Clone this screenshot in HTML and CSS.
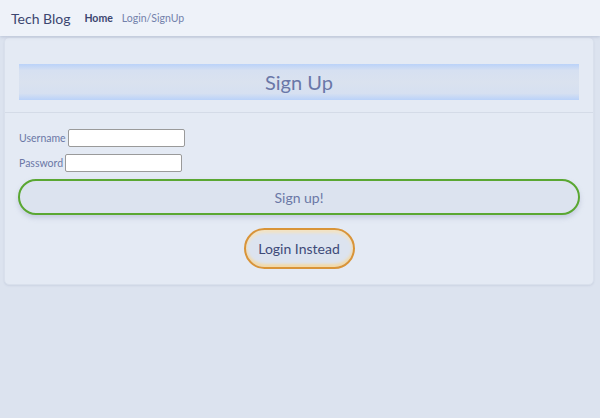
FILE: index.html
```html
<!DOCTYPE html>
<html lang="en">
<head>
<meta charset="utf-8">
<title>Tech Blog - Sign Up</title>
<link rel="stylesheet" href="styles.css">
</head>
<body>
<nav class="navbar">
  <span class="brand">Tech Blog</span>
  <a class="nav-link active" href="#">Home</a>
  <a class="nav-link" href="#">Login/SignUp</a>
</nav>
<main class="card">
  <header class="card-header">
    <h1 class="banner">Sign Up</h1>
  </header>
  <form class="card-body">
    <div class="field">
      <label class="label" for="u">Username</label>
      <input class="input" id="u" type="text">
    </div>
    <div class="field">
      <label class="label" for="p">Password</label>
      <input class="input" id="p" type="password">
    </div>
    <button class="btn-signup" type="button">Sign up!</button>
    <div class="alt">
      <button class="btn-login" type="button">Login Instead</button>
    </div>
  </form>
</main>
</body>
</html>
```
FILE: styles.css
```css
* { box-sizing: border-box; }
html, body { height: 100%; }
body {
  margin: 0;
  background: #dce3ef;
  font-family: "Lato", "Open Sans", sans-serif;
  color: #6b78a6;
}
.navbar {
  height: 36px;
  background: #eef2f9;
  display: flex;
  align-items: center;
  padding-left: 11px;
  box-shadow: 0 1px 3px rgba(120,135,170,0.35);
  position: relative;
  z-index: 1;
}
.brand {
  font-size: 14px;
  color: #3c4670;
  margin-right: 14px;
}
.nav-link {
  font-size: 10.5px;
  text-decoration: none;
  color: #7381ab;
  margin-right: 9px;
}
.nav-link.active { color: #3c4670; font-weight: 700; }
.card {
  margin: 1px 6px 0 4px;
  background: #e4eaf4;
  border: 1px solid #d9e0ec;
  border-radius: 5px;
  box-shadow: 0 1px 2px rgba(140,150,180,0.2);
}
.card-header {
  padding: 26px 14px 12px;
  border-bottom: 1px solid #d4dbe7;
}
.banner {
  margin: 0;
  height: 36px;
  line-height: 36px;
  text-align: center;
  font-weight: 400;
  font-size: 20px;
  color: #6a77a8;
  background: linear-gradient(to bottom, #bad2f9 0%, #d6e0f1 18%, #dae2ef 50%, #d6e0f1 82%, #bad2f9 100%);
}
.card-body {
  padding: 16px 13px 15px 13px;
  display: flex;
  flex-direction: column;
}
.field {
  display: flex;
  align-items: center;
  gap: 2px;
  margin-bottom: 7px;
  padding-left: 1px;
}
.label { font-size: 10.5px; color: #6b78a6; }
.input {
  width: 117px;
  height: 18px;
  border: 1px solid #9a9a9a;
  border-radius: 2px;
  background: #fff;
}
.btn-signup {
  height: 36px;
  width: 100%;
  border: 2px solid #5aa732;
  border-radius: 18px;
  background: #dce3ef;
  color: #6b78a6;
  font-family: inherit;
  font-size: 14px;
  box-shadow: 0 3px 5px rgba(140,150,185,0.35);
}
.alt {
  display: flex;
  justify-content: center;
  margin-top: 13px;
}
.btn-login {
  width: 111px;
  height: 41px;
  border: 2px solid #d99438;
  border-radius: 21px;
  background: #dce3ef;
  color: #3e4a78;
  font-family: inherit;
  font-size: 14px;
  box-shadow: inset 0 -3px 3px #f3d9a5, inset 0 3px 3px #f3e3c3;
}
```
